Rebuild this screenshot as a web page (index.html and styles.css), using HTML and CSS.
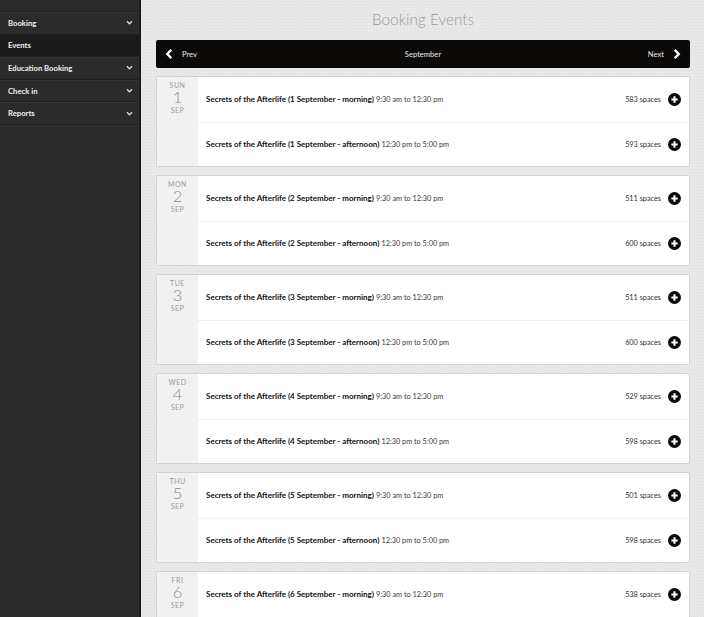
FILE: index.html
```html
<!DOCTYPE html>
<html>
<head>
<meta charset="utf-8">
<link rel="stylesheet" href="styles.css">
</head>
<body>
<div class="layout">
  <aside class="sidebar">
    <div class="nav-item nav-top"></div>
    <div class="nav-item"><span>Booking</span><svg class="caret" viewBox="0 0 8 6"><polyline points="1,1.5 4,4.5 7,1.5"/></svg></div>
    <div class="nav-item active"><span>Events</span></div>
    <div class="nav-item"><span>Education Booking</span><svg class="caret" viewBox="0 0 8 6"><polyline points="1,1.5 4,4.5 7,1.5"/></svg></div>
    <div class="nav-item"><span>Check in</span><svg class="caret" viewBox="0 0 8 6"><polyline points="1,1.5 4,4.5 7,1.5"/></svg></div>
    <div class="nav-item"><span>Reports</span><svg class="caret" viewBox="0 0 8 6"><polyline points="1,1.5 4,4.5 7,1.5"/></svg></div>
  </aside>
  <main class="main">
    <h1 class="title">Booking Events</h1>
    <div class="month-bar">
      <div class="month-link"><svg class="chev" viewBox="0 0 10 12"><polyline points="7,1.5 2.5,6 7,10.5"/></svg><span>Prev</span></div>
      <div class="month-name">September</div>
      <div class="month-link right"><span>Next</span><svg class="chev" viewBox="0 0 10 12"><polyline points="3,1.5 7.5,6 3,10.5"/></svg></div>
    </div>
    <div id="days"></div>
  </main>
</div>
<script src="app.js"></script>
</body>
</html>
```
FILE: app.js
```js
var days = [
  ["SUN", 1, 583, 593],
  ["MON", 2, 511, 600],
  ["TUE", 3, 511, 600],
  ["WED", 4, 529, 598],
  ["THU", 5, 501, 598],
  ["FRI", 6, 538, 600]
];
var plus = '<svg class="plus" viewBox="0 0 14 14"><circle cx="7" cy="7" r="7"/><path d="M7 3.6V10.4M3.6 7H10.4"/></svg>';
var html = "";
days.forEach(function (d) {
  html += '<div class="day-card"><div class="date"><div class="dow">' + d[0] + '</div><div class="dnum">' + d[1] + '</div><div class="mon">SEP</div></div><div class="events">';
  html += '<div class="event"><div class="ev-text"><b>Secrets of the Afterlife (' + d[1] + ' September - morning)</b> <span class="time">9:30 am to 12:30 pm</span></div><div class="ev-right"><span class="spaces">' + d[2] + ' spaces</span>' + plus + '</div></div>';
  html += '<div class="event"><div class="ev-text"><b>Secrets of the Afterlife (' + d[1] + ' September - afternoon)</b> <span class="time">12:30 pm to 5:00 pm</span></div><div class="ev-right"><span class="spaces">' + d[3] + ' spaces</span>' + plus + '</div></div>';
  html += '</div></div>';
});
document.getElementById("days").innerHTML = html;
```
FILE: styles.css
```css
* { box-sizing: border-box; }
html, body { margin: 0; padding: 0; height: 100%; overflow: hidden; }
body {
  font-family: Lato, "Open Sans", sans-serif;
  background: #e7e7e7;
}
.layout { display: flex; height: 617px; }
.sidebar {
  width: 141px;
  flex: none;
  background: #2b2b2b;
  border-right: 2px solid #1c1c1c;
}
.nav-item {
  height: 22.6px;
  border-bottom: 1px solid #1f1f1f;
  box-shadow: 0 1px 0 #353535;
  display: flex;
  align-items: center;
  justify-content: space-between;
  padding: 0 6px 0 8px;
  color: #f0f0f0;
  font-size: 7.7px;
  font-weight: 700;
}
.nav-top { height: 12px; }
.nav-item.active { background: #1b1b1b; }
.caret { width: 7px; height: 5px; fill: none; stroke: #ddd; stroke-width: 1.6; }
.main {
  flex: 1;
  padding: 0 14px 0 15px;
  background: #e8e8e8;
  background-image: radial-gradient(#dfdfdf 0.6px, transparent 0.7px);
  background-size: 3px 3px;
}
.title {
  margin: 0;
  height: 40px;
  line-height: 38px;
  text-align: center;
  font-weight: 300;
  font-size: 15.4px;
  color: #9a9a9a;
}
.month-bar {
  height: 28px;
  background: #0b0a08;
  border-radius: 2px;
  display: flex;
  align-items: center;
  justify-content: space-between;
  padding: 0 9px 0 9px;
  color: #e8e8e8;
  font-size: 7.6px;
  margin-bottom: 8px;
}
.month-link { display: flex; align-items: center; gap: 8px; width: 60px; }
.month-link.right { justify-content: flex-end; gap: 8px; }
.month-name { flex: 1; text-align: center; }
.chev { width: 9px; height: 12px; fill: none; stroke: #fff; stroke-width: 2.6; stroke-linecap: butt; }
.day-card {
  display: flex;
  border: 1px solid #d3d3d3;
  border-radius: 2px;
  background: #fff;
  margin-bottom: 8px;
  overflow: hidden;
}
.date {
  width: 41px;
  flex: none;
  background: #f1f1f1;
  text-align: center;
  color: #9a9a9a;
  padding-top: 4px;
}
.dow, .mon { font-size: 7px; letter-spacing: 0.5px; line-height: 8px; }
.dnum { font-size: 16.5px; font-weight: 300; line-height: 17px; color: #8c8c8c; }
.events { flex: 1; }
.event {
  height: 44.5px;
  display: flex;
  align-items: center;
  justify-content: space-between;
  padding: 0 8px 0 8px;
  font-size: 8px;
  color: #3a3a3a;
}
.event + .event { border-top: 1px solid #efefef; }
.ev-text b { color: #111; font-weight: 700; }
.time { font-size: 7.3px; }
.ev-right { display: flex; align-items: center; gap: 7px; font-size: 7.3px; }
.spaces { color: #333; }
.plus { width: 13px; height: 13px; display: block; }
.plus circle { fill: #0a0a0a; }
.plus path { stroke: #fff; stroke-width: 2.2; fill: none; }
```
